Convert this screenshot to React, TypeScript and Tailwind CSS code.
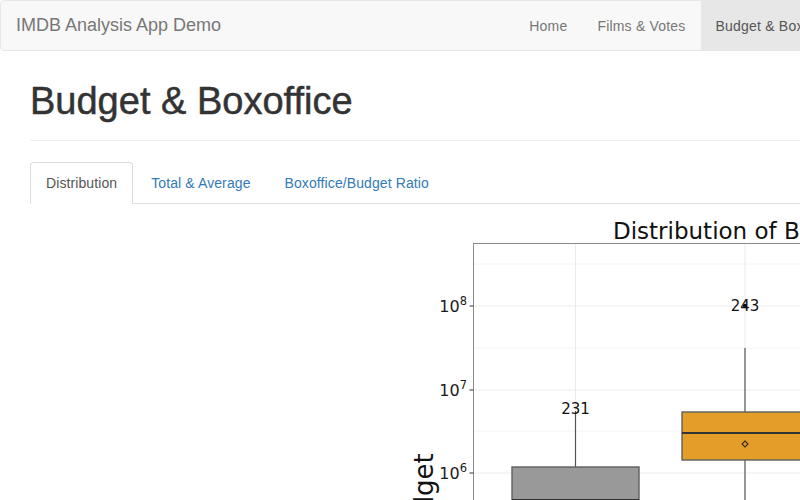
import React from 'react'

const navLinks = ['Home', 'Films & Votes', 'Budget & Boxoffice']
const tabs = ['Distribution', 'Total & Average', 'Boxoffice/Budget Ratio']

function Pow({ x, y, exp }: { x: number; y: number; exp: string }) {
  // tick label like 10^8, right aligned at x
  return (
    <text x={x} y={y} textAnchor="end" fontSize="16" fill="#1a1a1a">
      10
      <tspan fontSize="11.5" dy="-7">{exp}</tspan>
    </text>
  )
}

function BudgetChart() {
  const major = [305, 389, 472]
  const minor = [263, 347, 430]
  return (
    <svg
      width={854}
      height={297}
      viewBox="0 203 854 297"
      className="block"
      style={{ fontFamily: '"DejaVu Sans", sans-serif' }}
    >
      {/* title */}
      <text x={613} y={238} fontSize="23" fill="#111">
        Distribution of Budget
      </text>

      {/* grid */}
      {minor.map((y) => (
        <line key={'n' + y} x1={474} x2={900} y1={y} y2={y} stroke="#f4f4f4" strokeWidth={1} />
      ))}
      {major.map((y) => (
        <line key={'m' + y} x1={474} x2={900} y1={y} y2={y} stroke="#ebebeb" strokeWidth={1} />
      ))}
      <line x1={575.5} x2={575.5} y1={243} y2={520} stroke="#ebebeb" />
      <line x1={745} x2={745} y1={243} y2={520} stroke="#ebebeb" />

      {/* panel border */}
      <rect x={473.5} y={242.5} width={500} height={400} fill="none" stroke="#8a8a8a" strokeWidth={1} />

      {/* ticks + labels */}
      {major.map((y) => (
        <line key={'t' + y} x1={469.5} x2={473.5} y1={y} y2={y} stroke="#333" />
      ))}
      <Pow x={467} y={311} exp="8" />
      <Pow x={467} y={395} exp="7" />
      <Pow x={467} y={478} exp="6" />

      {/* y axis title */}
      <text x={433} y={499} fontSize="26" fill="#111" textAnchor="middle" transform="rotate(-90 433 499)">
        Budget
      </text>

      {/* gray box */}
      <line x1={575.5} x2={575.5} y1={410} y2={466} stroke="#555" strokeWidth={1.2} />
      <rect x={512} y={466} width={127} height={60} fill="#999999" stroke="#5f5f5f" strokeWidth={1.4} />
      <line x1={512} x2={639} y1={499} y2={499} stroke="#333" strokeWidth={2.2} />
      <text x={575.5} y={413} fontSize="15" textAnchor="middle" fill="#111">
        231
      </text>

      {/* orange box */}
      <line x1={745} x2={745} y1={347} y2={411} stroke="#555" strokeWidth={1.2} />
      <line x1={745} x2={745} y1={459} y2={520} stroke="#555" strokeWidth={1.2} />
      <rect x={682} y={411} width={127} height={48} fill="#e39d28" stroke="#5f5f5f" strokeWidth={1.4} />
      <line x1={682} x2={809} y1={432} y2={432} stroke="#333" strokeWidth={2.2} />
      <path d="M745 440 L748 443 L745 446 L742 443 Z" fill="none" stroke="#3a2a10" strokeWidth={1.1} />
      <circle cx={745} cy={305} r={2.2} fill="#111" />
      <text x={745} y={310} fontSize="15" textAnchor="middle" fill="#111">
        243
      </text>
    </svg>
  )
}

export default function App() {
  return (
    <div className="w-[800px] h-[500px] overflow-hidden bg-white" style={{ fontFamily: '"Liberation Sans", Arial, sans-serif' }}>
      <div className="w-[854px]">
        {/* Navbar */}
        <div className="flex h-[51px] items-stretch justify-between rounded border border-[#e7e7e7] bg-[#f8f8f8]">
          <span className="flex items-center px-[15px] text-[18px] text-[#777]">IMDB Analysis App Demo</span>
          <ul className="flex">
            {navLinks.map((l, i) => (
              <li
                key={l}
                className={
                  i === 2
                    ? 'flex items-center bg-[#e7e7e7] px-[15px] pt-[2px] text-[14px] tracking-[0.2px] text-[#555]'
                    : 'flex items-center px-[15px] pt-[2px] text-[14px] tracking-[0.2px] text-[#777]'
                }
              >
                {l}
              </li>
            ))}
          </ul>
        </div>

        <div className="px-[30px]">
          {/* Page header */}
          <div className="mt-[30px] border-b border-[#eee] pb-[18px]">
            <h1 className="text-[38px] leading-[41px] text-[#333] [-webkit-text-stroke:0.5px_#333]">Budget &amp; Boxoffice</h1>
          </div>

          {/* Tabs */}
          <ul className="mt-[21px] flex border-b border-[#ddd] text-[14px] leading-[20px] tracking-[0.1px]">
            {tabs.map((t, i) => (
              <li
                key={t}
                className={
                  i === 0
                    ? '-mb-px mr-[2px] rounded-t border border-[#ddd] border-b-white bg-white px-[15px] py-[10px] text-[#555]'
                    : '-mb-px mr-[2px] border border-transparent px-[15px] py-[10px] text-[#337ab7]'
                }
              >
                {t}
              </li>
            ))}
          </ul>
        </div>

        <BudgetChart />
      </div>
    </div>
  )
}
